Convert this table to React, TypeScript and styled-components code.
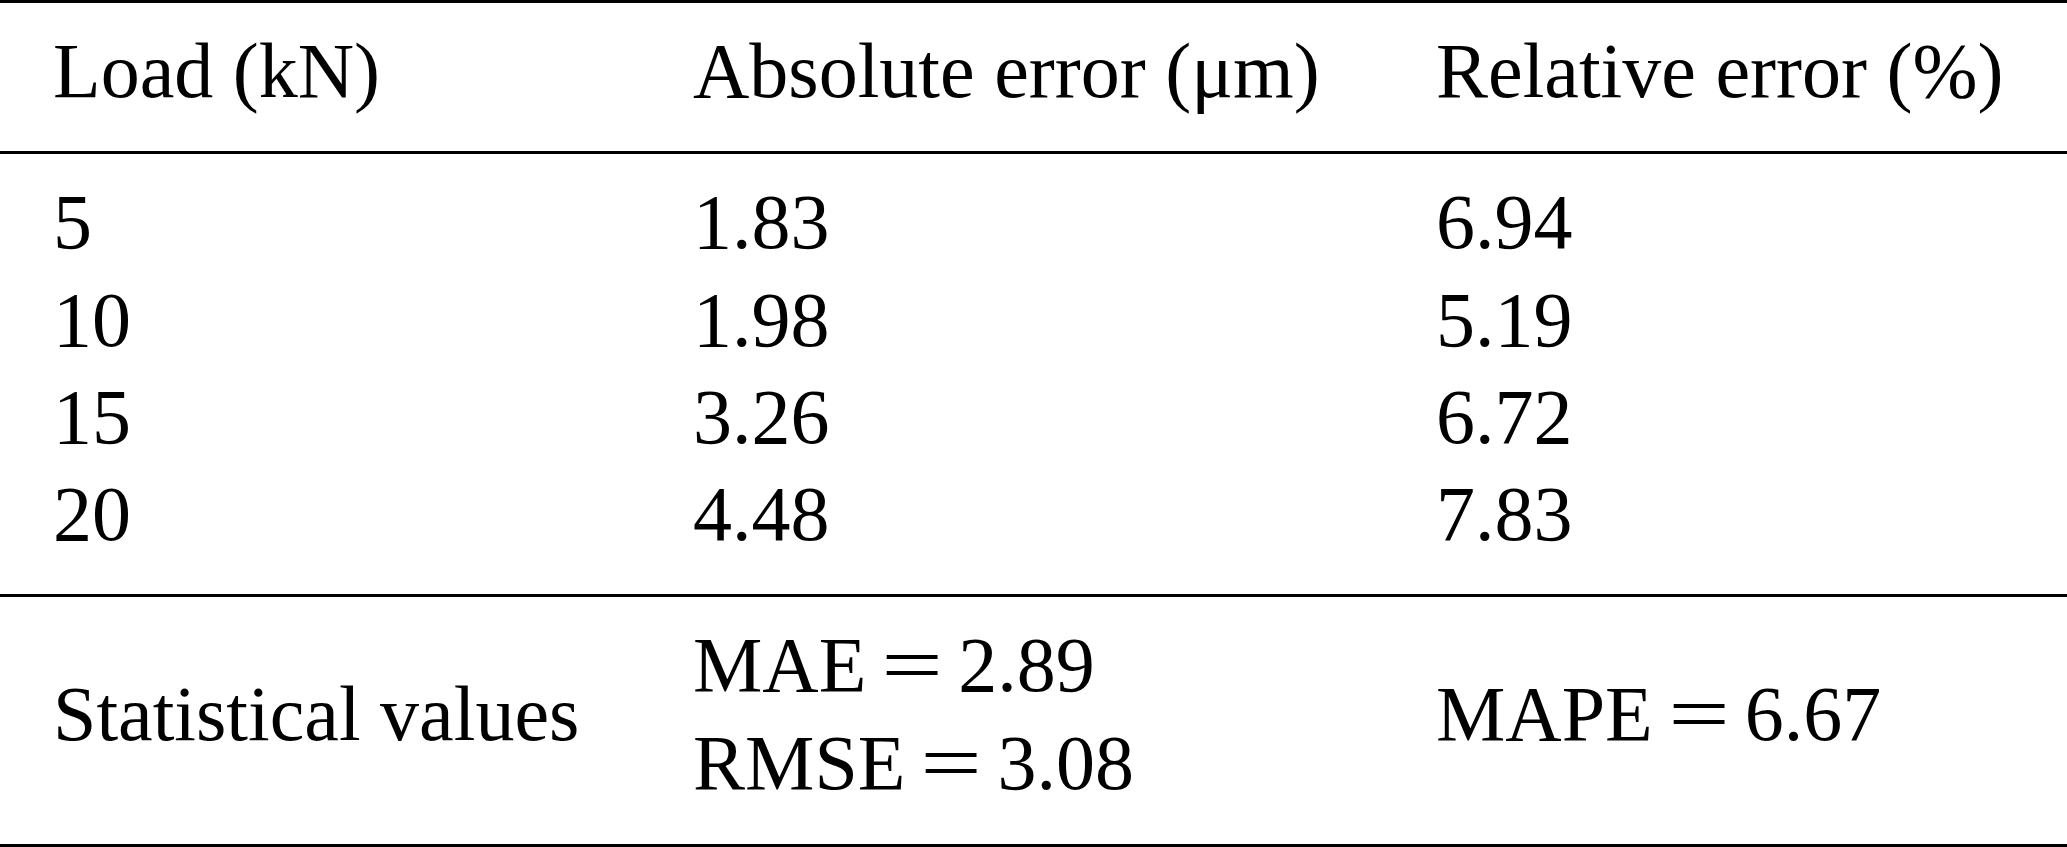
import React from "react";
import styled, { createGlobalStyle } from "styled-components";

const GlobalStyle = createGlobalStyle`
  html, body {
    margin: 0;
    padding: 0;
    background: #ffffff;
  }
  body {
    font-family: "Liberation Serif", "Times New Roman", serif;
    color: #000000;
  }
`;

const Table = styled.div`
  width: 2067px;
  border-top: 3px solid #000;
  font-family: "Liberation Serif", "Times New Roman", serif;
  font-size: 78px;
  line-height: 97.3px;
  color: #000;
`;

const Section = styled.div<{ $padBottom: number }>`
  padding: 19px 0 ${(p) => p.$padBottom}px 53px;
  border-bottom: 3px solid #000;
`;

const Row = styled.div`
  display: grid;
  grid-template-columns: 640px 743px 1fr;
  align-items: center;
`;

const Cell = styled.div`
  white-space: nowrap;
`;

const Stack = styled.div`
  display: flex;
  flex-direction: column;
`;

const Line = styled.span`
  white-space: nowrap;
`;

const Eq = styled.span`
  display: inline-block;
  width: 92px;
  text-align: center;
  transform: scaleX(1.4);
`;

const rows: [string, string, string][] = [
  ["5", "1.83", "6.94"],
  ["10", "1.98", "5.19"],
  ["15", "3.26", "6.72"],
  ["20", "4.48", "7.83"],
];

const Stat = ({ name, value }: { name: string; value: string }) => (
  <Line>
    {name}
    <Eq>=</Eq>
    {value}
  </Line>
);

export default function App() {
  return (
    <>
      <GlobalStyle />
      <Table>
        <Section $padBottom={32}>
          <Row>
            <Cell>Load (kN)</Cell>
            <Cell>Absolute error (μm)</Cell>
            <Cell>Relative error (%)</Cell>
          </Row>
        </Section>
        <Section $padBottom={32}>
          {rows.map((r) => (
            <Row key={r[0]}>
              <Cell>{r[0]}</Cell>
              <Cell>{r[1]}</Cell>
              <Cell>{r[2]}</Cell>
            </Row>
          ))}
        </Section>
        <Section $padBottom={33}>
          <Row>
            <Cell>Statistical values</Cell>
            <Stack>
              <Stat name="MAE" value="2.89" />
              <Stat name="RMSE" value="3.08" />
            </Stack>
            <Cell>
              <Stat name="MAPE" value="6.67" />
            </Cell>
          </Row>
        </Section>
      </Table>
    </>
  );
}
